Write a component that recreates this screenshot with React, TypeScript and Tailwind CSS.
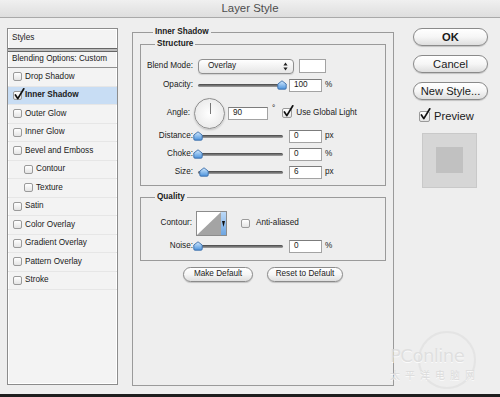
import React from "react";

function Box({ checked = false, size = "h-[9px] w-[9px]" }: { checked?: boolean; size?: string }) {
  return (
    <span className={`relative inline-block shrink-0 rounded-[2px] border border-[#9a9a9a] bg-linear-to-b from-white to-[#e4e4e4] ${size}`}>
      {checked && (
        <svg className="absolute -left-[0px] -top-[4px] overflow-visible" width="11" height="12" viewBox="0 0 11 12">
          <path d="M1.4 7 L3.8 10.6 L9.8 0.8" fill="none" stroke="#111" strokeWidth="1.7" strokeLinecap="round" strokeLinejoin="round" />
        </svg>
      )}
    </span>
  );
}

function Knob({ pos }: { pos: string }) {
  return (
    <svg className={`absolute top-[2px] ${pos}`} width="10" height="10" viewBox="0 0 10 10">
      <defs>
        <linearGradient id="kg" x1="0" y1="0" x2="0" y2="1">
          <stop offset="0" stopColor="#d4ebff" />
          <stop offset="1" stopColor="#4a92dc" />
        </linearGradient>
      </defs>
      <path d="M5 0.8 L9.2 4 V8 Q9.2 9.2 8 9.2 H2 Q0.8 9.2 0.8 8 V4 Z" fill="url(#kg)" stroke="#3b6da8" strokeWidth="0.9" />
    </svg>
  );
}

function Slider({ pos }: { pos: string }) {
  return (
    <div className="relative h-[14px] w-[89px] shrink-0">
      <div className="absolute left-[1px] right-[3px] top-[6px] h-[3px] rounded-full bg-linear-to-b from-[#454545] to-[#a5a5a5]" />
      <Knob pos={pos} />
    </div>
  );
}

function Field({ value, w = "w-[33px]" }: { value: string; w?: string }) {
  return (
    <div className={`flex h-[13px] shrink-0 items-center border border-[#a3a3a3] border-t-[#7c7c7c] bg-white pl-[4px] text-[8.2px] ${w}`}>
      {value}
    </div>
  );
}

function SliderRow({ label, pos, value, unit, mt }: { label: string; pos: string; value: string; unit: string; mt: string }) {
  return (
    <div className={`flex h-[14px] items-center ${mt}`}>
      <div className="w-[52px] text-right">{label}</div>
      <div className="ml-[4px] flex items-center">
        <Slider pos={pos} />
        <div className="ml-[3px]">
          <Field value={value} />
        </div>
        <span className="ml-[3px]">{unit}</span>
      </div>
    </div>
  );
}

function Pill({ children, className = "" }: { children: React.ReactNode; className?: string }) {
  return (
    <div
      className={`flex items-center justify-center rounded-full border border-[#8a8a8a] bg-linear-to-b from-white via-[#f6f6f6] to-[#dedede] shadow-[0_1px_1px_rgba(0,0,0,0.18)] ${className}`}
    >
      {children}
    </div>
  );
}

const styles: { label: string; indent?: boolean; checked?: boolean }[] = [
  { label: "Drop Shadow" },
  { label: "Inner Shadow", checked: true },
  { label: "Outer Glow" },
  { label: "Inner Glow" },
  { label: "Bevel and Emboss" },
  { label: "Contour", indent: true },
  { label: "Texture", indent: true },
  { label: "Satin" },
  { label: "Color Overlay" },
  { label: "Gradient Overlay" },
  { label: "Pattern Overlay" },
  { label: "Stroke" },
];

export default function App() {
  return (
    <div className="relative flex h-[397px] w-[500px] flex-col overflow-hidden bg-[#eeeeee] font-['Liberation_Sans',Arial,sans-serif] text-[8.2px] text-[#1a1a1a]">
      {/* title bar */}
      <div className="flex h-[18px] shrink-0 items-center justify-center border-b border-[#a9a9a9] bg-linear-to-b from-[#f0f0f0] to-[#dedede] text-[11.4px] text-[#4d4d4d]">
        Layer Style
      </div>

      <div className="flex flex-1">
        {/* styles list */}
        <div className="ml-[7px] mt-[10px] flex h-[357px] w-[111px] shrink-0 flex-col border border-[#8c8c8c] bg-[#f3f3f3] shadow-[inset_0_0_0_1px_#ffffff]">
          <div className="flex h-[19px] items-center pl-[4px]">Styles</div>
          <div className="h-[4px] border-y border-[#666] bg-[#bcbcbc]" />
          <div className="flex h-[16px] items-center border-b border-[#8f8f8f] pl-[4px]">Blending Options: Custom</div>
          {styles.map((s) => (
            <div
              key={s.label}
              className={`flex h-[18.5px] items-center gap-[3px] border-b border-[#e6e6e6] ${s.indent ? "pl-[16px]" : "pl-[5px]"} ${
                s.checked ? "bg-[#c8ddf4] font-bold" : ""
              }`}
            >
              <Box checked={s.checked} />
              <span>{s.label}</span>
            </div>
          ))}
        </div>

        {/* main fieldset */}
        <fieldset className="ml-[14px] mt-[9px] h-[359px] w-[262px] shrink-0 border border-[#9a9a9a] px-[7px] pt-[1px]">
          <legend className="ml-[13px] px-[2px] text-[8.2px] leading-[10px] font-bold">Inner Shadow</legend>

          <fieldset className="mt-[1px] border border-[#9a9a9a] pb-[6px]">
            <legend className="ml-[14px] px-[2px] leading-[10px] font-bold">Structure</legend>

            <div className="mt-[9px] flex h-[16px] items-center">
              <div className="w-[52px] text-right">Blend Mode:</div>
              <div className="ml-[5px] flex h-[15px] w-[96px] items-center justify-between rounded-[4px] border border-[#8f8f8f] bg-linear-to-b from-white to-[#e6e6e6] pl-[9px] pr-[5px] shadow-[0_1px_1px_rgba(0,0,0,0.12)]">
                <span>Overlay</span>
                <svg width="5" height="9" viewBox="0 0 5 9">
                  <path d="M2.5 0.5 L4.6 3.5 H0.4 Z M2.5 8.5 L4.6 5.5 H0.4 Z" fill="#222" />
                </svg>
              </div>
              <div className="ml-[5px] h-[14px] w-[27px] border border-[#a3a3a3] bg-white" />
            </div>

            <SliderRow label="Opacity:" pos="left-[80px]" value="100" unit="%" mt="mt-[4px]" />

            <div className="mt-[6px] flex h-[31px] items-center">
              <div className="w-[49px] text-right">Angle:</div>
              <div className="relative ml-[4px] h-[31px] w-[31px] shrink-0 rounded-full border border-[#8e8e8e] bg-radial from-white to-[#e4e4e4] shadow-[0_1px_2px_rgba(0,0,0,0.2)]">
                <div className="absolute left-[14.5px] top-[4px] h-[11px] w-[1px] bg-[#777]" />
              </div>
              <div className="ml-[3px]">
                <Field value="90" w="w-[40px]" />
              </div>
              <span className="ml-[4px] -mt-[8px]">°</span>
              <div className="ml-[7px] flex items-center gap-[4px]">
                <Box checked size="h-[10px] w-[10px]" />
                <span>Use Global Light</span>
              </div>
            </div>

            <SliderRow label="Distance:" pos="left-[-4px]" value="0" unit="px" mt="mt-[0px]" />
            <SliderRow label="Choke:" pos="left-[-4px]" value="0" unit="%" mt="mt-[4px]" />
            <SliderRow label="Size:" pos="left-[2px]" value="6" unit="px" mt="mt-[4px]" />
          </fieldset>

          <fieldset className="mt-[6px] border border-[#9a9a9a] pb-[7px]">
            <legend className="ml-[14px] px-[2px] leading-[10px] font-bold">Quality</legend>

            <div className="mt-[9px] flex h-[25px] items-center">
              <div className="w-[51px] text-right">Contour:</div>
              <div className="ml-[4px] flex h-[25px] w-[31px] shrink-0 border border-[#8c8c8c] bg-white">
                <svg width="24" height="23" viewBox="0 0 24 23">
                  <path d="M0 23 L24 0 V23 Z" fill="#a4a4a4" />
                </svg>
                <div className="flex flex-1 items-center justify-center bg-linear-to-b from-[#bcd9f7] to-[#6ea6e2]">
                  <svg width="3" height="6" viewBox="0 0 3 6">
                    <path d="M0 0 H3 L1.5 6 Z" fill="#111" />
                  </svg>
                </div>
              </div>
              <div className="ml-[14px] flex items-center gap-[6px]">
                <Box />
                <span>Anti-aliased</span>
              </div>
            </div>

            <SliderRow label="Noise:" pos="left-[-4px]" value="0" unit="%" mt="mt-[3px]" />
          </fieldset>

          <div className="mt-[6px] flex justify-center gap-[14px]">
            <Pill className="h-[15px] w-[70px]">Make Default</Pill>
            <Pill className="h-[15px] w-[76px]">Reset to Default</Pill>
          </div>
        </fieldset>

        {/* buttons */}
        <div className="ml-[19px] mt-[10px] flex w-[75px] shrink-0 flex-col text-[11.2px]">
          <Pill className="h-[18px] font-bold">OK</Pill>
          <Pill className="mt-[9px] h-[18px]">Cancel</Pill>
          <Pill className="mt-[9px] h-[18px]">New Style...</Pill>
          <div className="ml-[6px] mt-[8px] flex items-center gap-[4px]">
            <Box checked size="h-[11px] w-[11px]" />
            <span>Preview</span>
          </div>
          <div className="ml-[9px] mt-[8px] flex h-[55px] w-[55px] items-center justify-center border border-[#c9c9c9] bg-[#d6d6d6]">
            <div className="h-[26px] w-[27px] bg-[#c1c1c1]" />
          </div>
        </div>
      </div>

      <div className="h-[3px] shrink-0 bg-[#1e1e1e]" />

      {/* watermark */}
      <div className="pointer-events-none absolute bottom-[15px] left-[390px] flex flex-col items-start opacity-80">
        <div className="absolute left-[28px] top-[-14px] h-[58px] w-[58px] rounded-full border-[2px] border-[#e2e2e2]" />
        <span className="relative font-['DejaVu_Sans',sans-serif] text-[18px] leading-[22px] tracking-[-0.5px] text-[#dcdcdc] [text-shadow:0_1px_0_#fff]">
          PConline
        </span>
        <span className="relative font-['Noto_Sans_CJK_SC',sans-serif] text-[10px] leading-[15px] tracking-[5px] text-[#d8d8d8] [text-shadow:0_1px_0_#fff]">
          太平洋电脑网
        </span>
      </div>
    </div>
  );
}
